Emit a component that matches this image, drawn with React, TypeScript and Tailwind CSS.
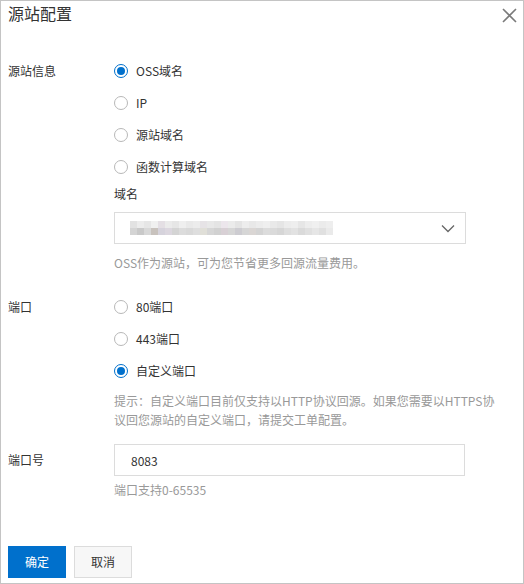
import { useState } from "react";

const blur = [
  "#e2e2e2", "#ececec", "#e6e6e6", "#f0f0f0", "#e4dfe4", "#ebebeb", "#e6e6e6", "#efefef",
  "#e9e9e9", "#ececec", "#e6e3e6", "#e8e8e8", "#e4e4e4", "#ece6ec", "#ebebeb", "#e4e4e4",
  "#ededed", "#e8e8e8", "#ececec", "#efefef", "#e9e9e9", "#e5e5e5", "#ececec", "#eeeeee",
  "#e6e6e6", "#ededed", "#f0f0f0", "#ebebeb", "#eeeeee",
  "#d4d4d4", "#c9c9c9", "#d8d8d8", "#c8c2bd", "#d6d3dc", "#dcd7df", "#d4d4d4", "#dcdcdc",
  "#d9d9d9", "#dedede", "#e0dfd8", "#d6d6d6", "#d1d1d1", "#d8d0d5", "#d6d6d6", "#cdccd1",
  "#d6d6d6", "#dad6d4", "#d4d4d4", "#dcdcdc", "#dadada", "#d6d6d6", "#dedede", "#e2e2e2",
  "#dadada", "#e0e0e0", "#e6e6e6", "#e0e0e0", "#eaeaea",
];

function Radio({ checked, label, onClick }: { checked: boolean; label: string; onClick: () => void }) {
  return (
    <div className="flex h-8 items-center gap-2 cursor-pointer" onClick={onClick}>
      <span
        className={
          checked
            ? "flex h-[14px] w-[14px] items-center justify-center rounded-full border-[1.5px] border-[#0070cc] bg-white"
            : "h-[14px] w-[14px] rounded-full border border-[#b8b8b8] bg-white"
        }
      >
        {checked && <span className="h-[8px] w-[8px] rounded-full bg-[#0070cc]" />}
      </span>
      <span className="text-[12px] leading-4 text-[#333]">{label}</span>
    </div>
  );
}

export default function App() {
  const [origin, setOrigin] = useState("oss");
  const [port, setPort] = useState("custom");

  return (
    <div className="relative h-[584px] w-[524px] border border-[#c4c4c4] bg-white font-['Noto_Sans_CJK_SC',sans-serif] text-[#333]">
      <div className="flex h-[54px] items-start justify-between pl-[7px] pr-[5px]">
        <h2 className="text-[16px] leading-[24px] text-[#333]">源站配置</h2>
        <button className="mt-[6px] p-[1px]">
          <svg width="15" height="15" viewBox="0 0 15 15">
            <path d="M1 1 L14 14 M14 1 L1 14" stroke="#7a7a7a" strokeWidth="1.6" />
          </svg>
        </button>
      </div>

      <div className="pl-[7px]">
        <div className="flex">
          <div className="w-[106px] pt-[8px] text-[12px] leading-4">源站信息</div>
          <div className="flex-1">
            <Radio checked={origin === "oss"} label="OSS域名" onClick={() => setOrigin("oss")} />
            <Radio checked={origin === "ip"} label="IP" onClick={() => setOrigin("ip")} />
            <Radio checked={origin === "domain"} label="源站域名" onClick={() => setOrigin("domain")} />
            <Radio checked={origin === "fc"} label="函数计算域名" onClick={() => setOrigin("fc")} />

            <div className="mt-[3px] text-[12px] leading-4">域名</div>
            <div className="mt-[10px] flex h-[32px] w-[352px] items-center justify-between border border-[#dcdcdc] pl-[15px] pr-[10px]">
              <div className="grid grid-cols-[repeat(29,7px)] grid-rows-[7px_7px]">
                {blur.map((c, i) => (
                  <div key={i} style={{ backgroundColor: c }} />
                ))}
              </div>
              <svg width="14" height="9" viewBox="0 0 14 9">
                <path d="M1 1.5 L7 7.5 L13 1.5" fill="none" stroke="#666" strokeWidth="1.3" />
              </svg>
            </div>
            <p className="mt-[11px] text-[12px] leading-4 text-[#999]">OSS作为源站，可为您节省更多回源流量费用。</p>
          </div>
        </div>

        <div className="mt-[20px] flex">
          <div className="w-[106px] pt-[8px] text-[12px] leading-4">端口</div>
          <div className="flex-1">
            <Radio checked={port === "80"} label="80端口" onClick={() => setPort("80")} />
            <Radio checked={port === "443"} label="443端口" onClick={() => setPort("443")} />
            <Radio checked={port === "custom"} label="自定义端口" onClick={() => setPort("custom")} />
            <p className="mt-[4px] w-[386px] text-[12px] leading-[19px] text-[#999]">
              提示：自定义端口目前仅支持以HTTP协议回源。如果您需要以HTTPS协议回您源站的自定义端口，请提交工单配置。
            </p>
          </div>
        </div>

        <div className="mt-[15px] flex">
          <div className="w-[106px] pt-[8px] text-[12px] leading-4">端口号</div>
          <div className="flex-1">
            <input
              defaultValue="8083"
              className="block h-[32px] w-[351px] border border-[#dcdcdc] pl-[16px] text-[12px] text-[#333] outline-none"
            />
            <p className="mt-[6px] text-[12px] leading-4 text-[#999]">端口支持0-65535</p>
          </div>
        </div>

        <div className="mt-[48px] flex gap-[8px]">
          <button className="h-[32px] w-[58px] bg-[#0070cc] text-[12px] text-white">确定</button>
          <button className="h-[32px] w-[58px] border border-[#dcdcdc] bg-[#f7f7f7] text-[12px] text-[#333]">取消</button>
        </div>
      </div>
    </div>
  );
}
